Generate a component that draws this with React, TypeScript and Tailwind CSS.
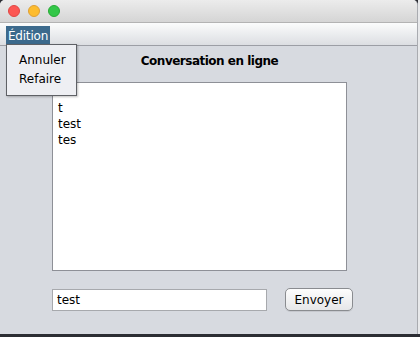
import React from 'react';

export default function App() {
  const messages = ['t', 'test', 'tes'];

  return (
    <div className="relative w-[420px] h-[337px] overflow-hidden bg-[#2b2d33] font-['DejaVu_Sans',sans-serif] text-[12px] text-black">
      {/* Window */}
      <div className="w-[418px] h-[334px] flex flex-col bg-[#d7dae0] rounded-t-[5px] overflow-hidden border-r border-[#a9abb0]">
        {/* Title bar */}
        <div className="h-[23px] flex items-center gap-[8px] pl-[8px] bg-gradient-to-b from-[#ececec] to-[#d5d5d5] border-b border-[#b3b3b3]">
          <span className="w-[12px] h-[12px] rounded-full bg-[#fc5753] border border-[#df4744]" />
          <span className="w-[12px] h-[12px] rounded-full bg-[#fdbc2e] border border-[#de9f34]" />
          <span className="w-[12px] h-[12px] rounded-full bg-[#33c748] border border-[#27aa35]" />
        </div>

        {/* Menu bar */}
        <div className="h-[23px] flex items-end pl-[6px] bg-gradient-to-b from-[#fbfcfc] to-[#dcdee2] border-b border-[#9c9ea5]">
          <div className="h-[19px] w-[44px] flex items-center justify-center bg-[#3c6a8d] text-white text-[12px] tracking-[-0.2px]">
            Édition
          </div>
        </div>

        {/* Content */}
        <div className="flex-1 flex flex-col">
          <div className="h-[28px] flex items-center justify-center pl-[2px] pt-[2px] font-bold text-[12px] tracking-[-0.5px]">
            Conversation en ligne
          </div>
          <div className="ml-[52px] mt-[8px] w-[295px] h-[189px] bg-white border border-[#8e9097] pt-[17px] pl-[5px] leading-[16px]">
            {messages.map((m, i) => (
              <div key={i}>{m}</div>
            ))}
          </div>
          <div className="mt-[17px] ml-[52px] flex items-center gap-[18px]">
            <div className="w-[215px] h-[22px] bg-white border border-[#a7a9ad] flex items-center pl-[4px]">
              test
            </div>
            <button className="w-[68px] h-[23px] rounded-[5px] border border-[#8a8c90] bg-gradient-to-b from-[#fdfdfd] to-[#e6e7e9] text-[12px] shadow-[0_1px_0_rgba(0,0,0,0.08)]">
              Envoyer
            </button>
          </div>
        </div>
      </div>

      {/* Edition dropdown */}
      <div className="absolute left-[6px] top-[44px] w-[71px] h-[52px] bg-[#eeeff3] border border-[#5f6166] shadow-[1px_1px_2px_rgba(0,0,0,0.25)] pt-[6px] pl-[12px] text-[12px] leading-[19px]">
        <div>Annuler</div>
        <div>Refaire</div>
      </div>

      {/* Desktop strip on right */}
      <div className="absolute right-0 top-0 w-[2px] h-[334px] bg-[#e8e9eb]" />
    </div>
  );
}
